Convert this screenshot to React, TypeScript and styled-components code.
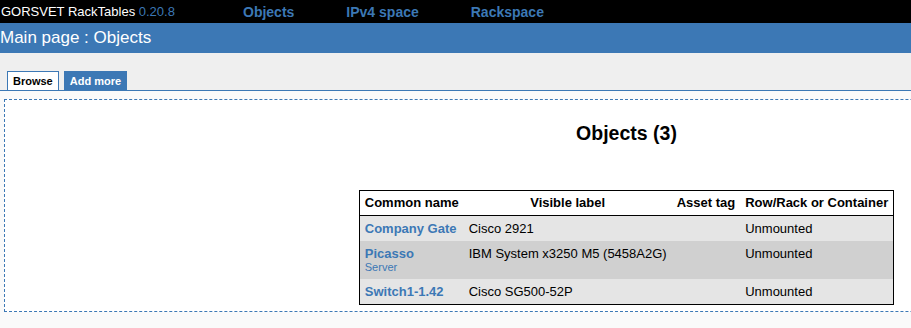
import styled, { createGlobalStyle } from "styled-components";

const GlobalStyle = createGlobalStyle`
    html, body {
        margin: 0;
        padding: 0;
        overflow: hidden;
        background: #fafafa;
        font-family: "Liberation Sans", Arial, sans-serif;
        font-size: 13px;
    }
`;

const objects = [
    { name: "Company Gate", label: "Cisco 2921", tag: "", place: "Unmounted" },
    { name: "Picasso", sub: "Server", label: "IBM System x3250 M5 (5458A2G)", tag: "", place: "Unmounted" },
    { name: "Switch1-1.42", label: "Cisco SG500-52P", tag: "", place: "Unmounted" },
];

const App = () => {
    return (
        <>
            <GlobalStyle />
            <TopBar>
                <Brand>
                    GORSVET RackTables <Version>0.20.8</Version>
                </Brand>
                <Nav>
                    <NavLink href="#">Objects</NavLink>
                    <NavLink href="#">IPv4 space</NavLink>
                    <NavLink href="#">Rackspace</NavLink>
                </Nav>
            </TopBar>
            <PathBar>Main page : Objects</PathBar>
            <TabBar>
                <Tab $active>Browse</Tab>
                <Tab>Add more</Tab>
            </TabBar>
            <Main>
                <Portlet>
                    <Title>Objects (3)</Title>
                    <CoolTable>
                        <thead>
                            <tr>
                                <Th>Common name</Th>
                                <Th>Visible label</Th>
                                <Th>Asset tag</Th>
                                <Th>Row/Rack or Container</Th>
                            </tr>
                        </thead>
                        <tbody>
                            {objects.map((o, i) => (
                                <Row key={o.name} $odd={i % 2 === 0}>
                                    <Td>
                                        <ObjLink href="#">{o.name}</ObjLink>
                                        {o.sub && <SubText>{o.sub}</SubText>}
                                    </Td>
                                    <Td>{o.label}</Td>
                                    <Td>{o.tag}</Td>
                                    <Td>{o.place}</Td>
                                </Row>
                            ))}
                        </tbody>
                    </CoolTable>
                </Portlet>
            </Main>
        </>
    );
};

const TopBar = styled.div`
    background: #000;
    height: 23px;
    display: flex;
    align-items: center;
    color: #fff;
`;

const Brand = styled.div`
    font-size: 13px;
    padding-left: 1px;
    width: 242px;
    white-space: nowrap;
`;

const Version = styled.span`
    color: #3c78b5;
`;

const Nav = styled.div`
    display: flex;
    gap: 52px;
`;

const NavLink = styled.a`
    color: #3c78b5;
    font-size: 14px;
    font-weight: bold;
    text-decoration: none;
`;

const PathBar = styled.div`
    background: #3c78b5;
    color: #fff;
    height: 30px;
    line-height: 30px;
    font-size: 17px;
`;

const TabBar = styled.div`
    background: #efefef;
    display: flex;
    gap: 5px;
    padding: 18px 0 0 7px;
    border-bottom: 1px solid #3c78b5;
`;

const Tab = styled.div<{ $active?: boolean }>`
    font-size: 11px;
    font-weight: bold;
    height: 19px;
    line-height: 18px;
    padding: 0 5px;
    box-sizing: border-box;
    background: ${(p) => (p.$active ? "#fff" : "#3c78b5")};
    color: ${(p) => (p.$active ? "#000" : "#fff")};
    border: 1px solid #3c78b5;
    border-bottom: none;
`;

const Main = styled.div`
    background: #fafafa;
    padding: 8px 0 18px 4px;
`;

const Portlet = styled.div`
    width: 1245px;
    box-sizing: border-box;
    background: #fff;
    border: 1px dashed #3c78b5;
    padding-bottom: 6px;
`;

const Title = styled.h2`
    text-align: center;
    font-size: 19.5px;
    line-height: 22px;
    margin: 22px 0 46px;
`;

const CoolTable = styled.table`
    margin: 0 auto;
    border: 1px solid #000;
    border-collapse: separate;
    border-spacing: 0;
    font-size: 13px;
`;

const Th = styled.th`
    background: #fff;
    padding: 5px;
    line-height: 14px;
    border-bottom: 1px solid #000;
    white-space: nowrap;
`;

const Row = styled.tr<{ $odd: boolean }>`
    background: ${(p) => (p.$odd ? "#e5e5e5" : "#d0d0d0")};
`;

const Td = styled.td`
    padding: 5px;
    line-height: 15px;
    vertical-align: top;
    text-align: left;
    white-space: nowrap;
`;

const ObjLink = styled.a`
    color: #3c78b5;
    font-weight: bold;
    text-decoration: none;
`;

const SubText = styled.div`
    color: #3c78b5;
    font-size: 11px;
    line-height: 13px;
`;

export default App;
